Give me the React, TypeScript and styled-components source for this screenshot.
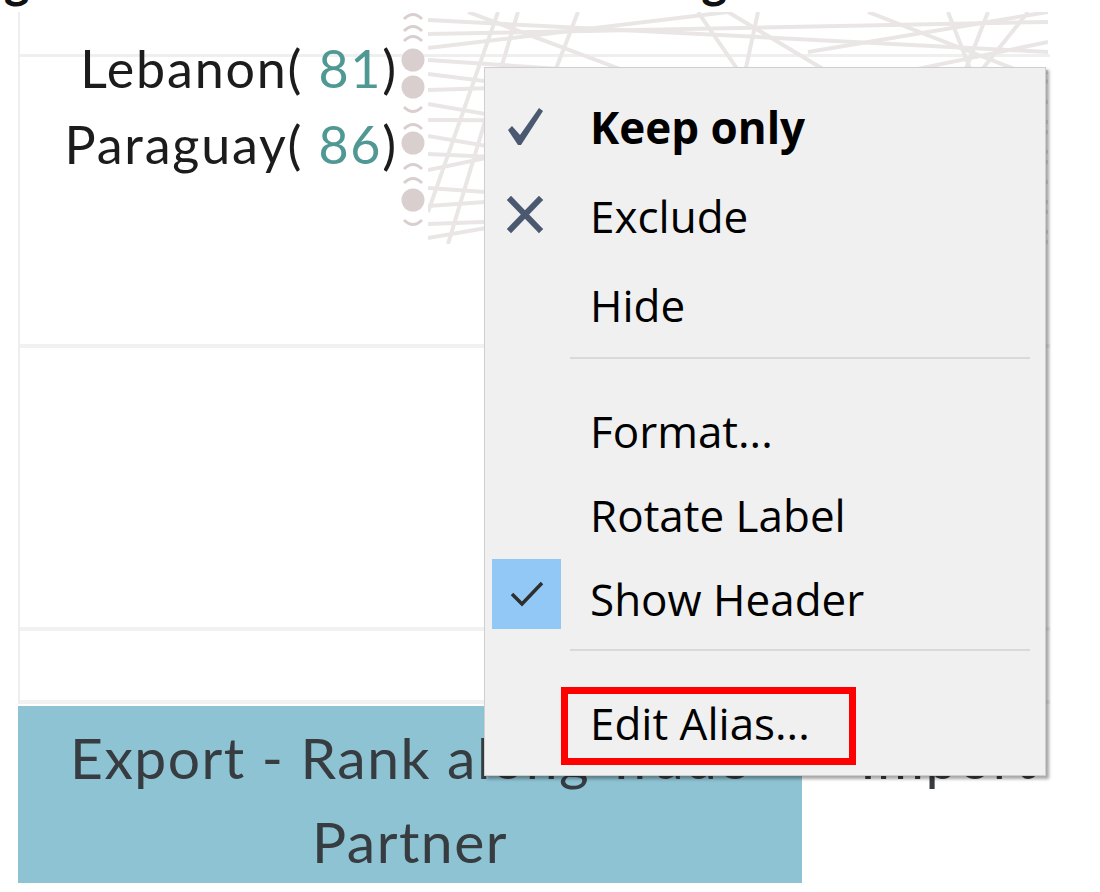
import React from "react";
import styled, { createGlobalStyle } from "styled-components";

const GlobalStyle = createGlobalStyle`
  html, body { margin: 0; padding: 0; background: #ffffff; }
  body { font-family: "Open Sans", "Liberation Sans", sans-serif; }
`;

const Page = styled.div`
  position: relative;
  width: 1100px;
  height: 892px;
  overflow: hidden;
  background: #ffffff;
`;

const TitleStrip = styled.div`
  height: 12px;
  overflow: hidden;
`;

const TitleRow = styled.div`
  display: flex;
  margin-top: -44px;
  font-family: Lato, "Liberation Sans", sans-serif;
  font-weight: 900;
  font-size: 48px;
  line-height: 48px;
  color: #111;
`;

const TitleGlyph = styled.span<{ $gap: number }>`
  margin-left: ${(p) => p.$gap}px;
`;

const Chart = styled.div`
  margin-left: 18px;
  width: 1030px;
  border-left: 2px solid #eeeeee;
  display: flex;
  flex-direction: column;
`;

const TopPane = styled.div`
  height: 332px;
  display: grid;
  grid-template-columns: 380px 28px 620px;
  background: linear-gradient(
    to bottom,
    transparent 42px,
    #efefef 42px,
    #efefef 45px,
    transparent 45px
  );
`;

const Pane = styled.div<{ $h: number }>`
  height: ${(p) => p.$h}px;
`;

const Divider = styled.div`
  height: 4px;
  background: #f1f1f1;
`;

const Labels = styled.div`
  padding-top: 18px;
  padding-right: 2px;
  text-align: right;
  font-family: Lato, "Liberation Sans", sans-serif;
  font-size: 52px;
  line-height: 76px;
  letter-spacing: 1.8px;
  color: #1c1c1c;
`;

const LabelLine = styled.div`
  white-space: nowrap;
`;

const Rank = styled.span`
  color: #4f9893;
`;

const DotsSvg = styled.svg`
  display: block;
`;

const LinesSvg = styled.svg`
  display: block;
`;

const HeaderRow = styled.div`
  margin-top: 2px;
  height: 177px;
  display: flex;
`;

const ExportHeader = styled.div`
  margin-left: 18px;
  width: 784px;
  background: #8ec3d3;
  padding-top: 9px;
  box-sizing: border-box;
  text-align: center;
  font-family: Lato, "Liberation Sans", sans-serif;
  font-weight: 400;
  font-size: 57px;
  line-height: 84px;
  letter-spacing: 1.5px;
  color: #363c40;
`;

const HeaderLine = styled.div`
  white-space: nowrap;
`;

const ImportHeader = styled.div`
  width: 246px;
  padding-top: 9px;
  padding-left: 58px;
  box-sizing: border-box;
  overflow: hidden;
  white-space: nowrap;
  font-family: Lato, "Liberation Sans", sans-serif;
  font-size: 57px;
  line-height: 84px;
  letter-spacing: 1.5px;
  color: #363c40;
`;

const Menu = styled.div`
  position: absolute;
  left: 484px;
  top: 67px;
  width: 562px;
  height: 709px;
  box-sizing: border-box;
  padding-top: 14px;
  background: #f0f0f0;
  border: 1px solid #cfcfcf;
  box-shadow: 3px 3px 3px rgba(0, 0, 0, 0.35);
  display: flex;
  flex-direction: column;
  font-family: "Open Sans", "Liberation Sans", sans-serif;
  font-size: 44px;
  color: #000;
`;

const Item = styled.div<{ $h: number; $bold?: boolean }>`
  position: relative;
  height: ${(p) => p.$h}px;
  padding-left: 7px;
  display: grid;
  grid-template-columns: 69px 1fr;
  column-gap: 29px;
  align-items: center;
  font-weight: ${(p) => (p.$bold ? 700 : 400)};
  white-space: nowrap;
`;

const IconCell = styled.div<{ $checked?: boolean }>`
  height: 70px;
  display: flex;
  align-items: center;
  justify-content: center;
  background: ${(p) => (p.$checked ? "#91c8f6" : "transparent")};
  margin-top: ${(p) => (p.$checked ? "-10px" : "0")};
`;

const Separator = styled.div`
  height: 2px;
  background: #d9d9d9;
  margin: 8px 15px 30px 85px;
`;

const Highlight = styled.div`
  position: absolute;
  left: 76px;
  top: 6px;
  width: 295px;
  height: 78px;
  box-sizing: border-box;
  border: 7px solid #ff0000;
`;

const KeepIcon = () => (
  <svg width="40" height="40" viewBox="0 0 40 40">
    <path d="M1 23 L5 19 L13 28 L32 1 L36 4 L14 38 L11 38 Z" fill="#4a5870" />
  </svg>
);

const ExcludeIcon = () => (
  <svg width="40" height="40" viewBox="0 0 40 40">
    <path d="M4 4 L32 33 M32 4 L4 33" stroke="#4a5870" strokeWidth="6" strokeLinecap="square" />
  </svg>
);

const ShowIcon = () => (
  <svg width="40" height="40" viewBox="0 0 40 40">
    <path d="M5 20 L15 30 L35 9" stroke="#2e2e2e" strokeWidth="3.5" fill="none" />
  </svg>
);

const dotCircles = [48, 75, 131, 188];
const dotArcsTop = [1, 13, 23, 111, 151, 165];
const dotArcsBottom = [95, 208];

const Dots = () => (
  <DotsSvg width="28" height="232" viewBox="0 0 28 232">
    {dotCircles.map((y) => (
      <circle key={y} cx="13" cy={y} r="11.5" fill="#dacfcf" />
    ))}
    {dotArcsTop.map((y) => (
      <path key={"t" + y} d={`M4 ${y + 6} Q13 ${y - 3} 22 ${y + 6}`} stroke="#dacfcf" strokeWidth="3" fill="none" />
    ))}
    {dotArcsBottom.map((y) => (
      <path key={"b" + y} d={`M4 ${y} Q13 ${y + 9} 22 ${y}`} stroke="#dacfcf" strokeWidth="3" fill="none" />
    ))}
  </DotsSvg>
);

const lines: [number, number, number, number][] = [
  [0, 8, 620, 40],
  [0, 22, 620, 10],
  [0, 36, 300, 0],
  [0, 48, 620, 90],
  [0, 62, 620, 140],
  [0, 78, 620, 60],
  [0, 92, 620, 200],
  [0, 108, 620, 110],
  [0, 124, 620, 230],
  [0, 142, 620, 170],
  [0, 158, 620, 30],
  [0, 176, 620, 220],
  [0, 194, 620, 150],
  [0, 212, 620, 190],
  [0, 226, 620, 120],
  [20, 232, 90, 0],
  [0, 200, 70, 0],
  [40, 0, 200, 60],
  [150, 0, 60, 232],
  [270, 0, 430, 232],
  [330, 0, 280, 232],
  [300, 0, 400, 60],
  [520, 0, 610, 232],
  [560, 0, 470, 232],
  [440, 0, 620, 70],
  [380, 40, 620, 0],
  [600, 0, 520, 100],
];

const Lines = () => (
  <LinesSvg width="620" height="232" viewBox="0 0 620 232">
    {lines.map(([x1, y1, x2, y2], i) => (
      <line key={i} x1={x1} y1={y1} x2={x2} y2={y2} stroke="#ebe6e6" strokeWidth="4" />
    ))}
  </LinesSvg>
);

export default function App() {
  return (
    <Page>
      <GlobalStyle />
      <TitleStrip>
        <TitleRow>
          <TitleGlyph $gap={4}>g</TitleGlyph>
          <TitleGlyph $gap={672}>g</TitleGlyph>
        </TitleRow>
      </TitleStrip>
      <Chart>
        <TopPane>
          <Labels>
            <LabelLine>
              Lebanon( <Rank>81</Rank>)
            </LabelLine>
            <LabelLine>
              Paraguay( <Rank>86</Rank>)
            </LabelLine>
          </Labels>
          <Dots />
          <Lines />
        </TopPane>
        <Divider />
        <Pane $h={279} />
        <Divider />
        <Pane $h={69} />
        <Divider />
      </Chart>
      <HeaderRow>
        <ExportHeader>
          <HeaderLine>Export - Rank along Trade</HeaderLine>
          <HeaderLine>Partner</HeaderLine>
        </ExportHeader>
        <ImportHeader>Import - Rank along Trade Partner</ImportHeader>
      </HeaderRow>
      <Menu>
        <Item $h={89} $bold>
          <IconCell>
            <KeepIcon />
          </IconCell>
          <span>Keep only</span>
        </Item>
        <Item $h={89}>
          <IconCell>
            <ExcludeIcon />
          </IconCell>
          <span>Exclude</span>
        </Item>
        <Item $h={89}>
          <IconCell />
          <span>Hide</span>
        </Item>
        <Separator />
        <Item $h={84}>
          <IconCell />
          <span>Format...</span>
        </Item>
        <Item $h={84}>
          <IconCell />
          <span>Rotate Label</span>
        </Item>
        <Item $h={84}>
          <IconCell $checked>
            <ShowIcon />
          </IconCell>
          <span>Show Header</span>
        </Item>
        <Separator />
        <Item $h={84}>
          <IconCell />
          <span>Edit Alias...</span>
          <Highlight />
        </Item>
      </Menu>
    </Page>
  );
}
